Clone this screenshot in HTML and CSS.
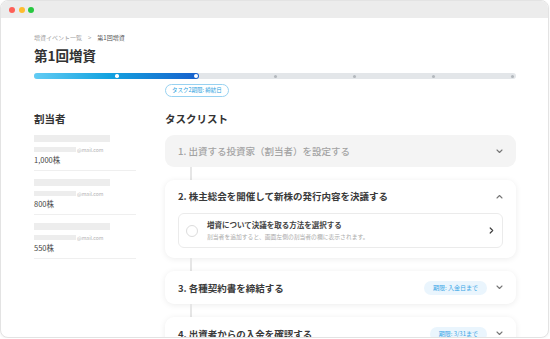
FILE: index.html
```html
<!DOCTYPE html>
<html lang="ja">
<head>
  <meta charset="UTF-8" />
  <meta name="viewport" content="width=device-width, initial-scale=1" />
  <title>第1回増資</title>
  <link rel="stylesheet" href="styles.css">
</head>
<body>
  <div class="window">
    <div class="titlebar">
      <span class="light red"></span>
      <span class="light yellow"></span>
      <span class="light green"></span>
    </div>

    <div class="page">
      <div class="breadcrumb">
        <span>増資イベント一覧</span>
        <span class="crumb-sep">&gt;</span>
        <span class="crumb-current">第1回増資</span>
      </div>
      <h1>第1回増資</h1>

      <div class="progress">
        <div class="progress-fill"></div>
        <div class="progress-dots">
          <span class="dot start"></span>
          <span class="dot done"></span>
          <span class="dot current"></span>
          <span class="dot"></span>
          <span class="dot"></span>
          <span class="dot"></span>
          <span class="dot"></span>
        </div>
      </div>
      <div class="deadline-pill">タスク2期限: 締結日</div>

      <div class="columns">
        <aside class="allottees">
          <h2>割当者</h2>
          <div class="allottee-list">
            <div class="allottee">
              <div class="name-bar"></div>
              <div class="email"><span class="email-bar"></span><span>@mail.com</span></div>
              <div class="shares">1,000株</div>
            </div>
            <div class="allottee">
              <div class="name-bar"></div>
              <div class="email"><span class="email-bar"></span><span>@mail.com</span></div>
              <div class="shares">800株</div>
            </div>
            <div class="allottee">
              <div class="name-bar"></div>
              <div class="email"><span class="email-bar"></span><span>@mail.com</span></div>
              <div class="shares">550株</div>
            </div>
          </div>
        </aside>

        <section class="tasks">
          <h2>タスクリスト</h2>
          <div class="task-list">
            <div class="task done">
              <div class="task-head">
                <span class="task-title">1. 出資する投資家（割当者）を設定する</span>
                <svg class="chevron" width="7" height="5" viewBox="0 0 7 5"><path d="M1 1l2.5 2.5L6 1" /></svg>
              </div>
            </div>
            <div class="connector"></div>

            <div class="task open">
              <div class="task-head">
                <span class="task-title">2. 株主総会を開催して新株の発行内容を決議する</span>
                <svg class="chevron" width="7" height="5" viewBox="0 0 7 5"><path d="M1 4l2.5-2.5L6 4" /></svg>
              </div>
              <div class="subtask">
                <span class="check"></span>
                <div class="subtask-text">
                  <div class="subtask-title">増資について決議を取る方法を選択する</div>
                  <div class="subtask-note">割当者を追加すると、画面左側の割当者の欄に表示されます。</div>
                </div>
                <svg class="chevron-right" width="5" height="7" viewBox="0 0 5 7"><path d="M1.2 1l2.5 2.5L1.2 6" /></svg>
              </div>
            </div>
            <div class="connector"></div>

            <div class="task">
              <div class="task-head">
                <span class="task-title">3. 各種契約書を締結する</span>
                <span class="badge">期限: 入金日まで</span>
                <svg class="chevron" width="7" height="5" viewBox="0 0 7 5"><path d="M1 1l2.5 2.5L6 1" /></svg>
              </div>
            </div>
            <div class="connector"></div>

            <div class="task">
              <div class="task-head">
                <span class="task-title">4. 出資者からの入金を確認する</span>
                <span class="badge">期限: 3/31まで</span>
                <svg class="chevron" width="7" height="5" viewBox="0 0 7 5"><path d="M1 1l2.5 2.5L6 1" /></svg>
              </div>
            </div>
          </div>
        </section>
      </div>
    </div>
  </div>
</body>
</html>
```

FILE: styles.css
```css
body {
  margin: 0;
  background: #fff;
  font-family: "Noto Sans CJK JP", "Noto Sans", sans-serif;
  color: #333;
}

.window {
  box-sizing: border-box;
  width: 549px;
  height: 338px;
  border: 1px solid #e3e3e3;
  border-radius: 8px;
  overflow: hidden;
  background: #fff;
  box-shadow: 0 1px 3px rgba(0, 0, 0, 0.05);
}

.titlebar {
  height: 17px;
  background: #ececec;
  display: flex;
  align-items: center;
  gap: 3.5px;
  padding-left: 8px;
}

.light {
  width: 6px;
  height: 6px;
  border-radius: 50%;
}

.light.red { background: #fe5f57; }
.light.yellow { background: #febc2e; }
.light.green { background: #28c840; }

.page {
  padding: 15px 32px 0 33px;
}

.breadcrumb {
  display: flex;
  gap: 6px;
  font-size: 6px;
  line-height: 9px;
  color: #a0a0a0;
}

.crumb-current {
  color: #555;
}

h1 {
  margin: 4px 0 0;
  font-size: 13.5px;
  line-height: 18px;
  font-weight: 700;
  color: #333;
}

/* progress bar */
.progress {
  position: relative;
  margin-top: 9px;
  height: 6px;
  border-radius: 3px;
  background: #e3e6e9;
}

.progress-fill {
  position: absolute;
  left: 0;
  top: 0;
  bottom: 0;
  width: 165px;
  border-radius: 3px;
  background: linear-gradient(90deg, #62ccf4 0%, #14a3e0 45%, #1760cc 100%);
}

.progress-dots {
  position: relative;
  height: 100%;
  display: flex;
  align-items: center;
  justify-content: space-between;
  padding: 0 2px;
}

.dot {
  width: 4px;
  height: 4px;
  border-radius: 50%;
  display: flex;
  align-items: center;
  justify-content: center;
}

.dot::after {
  content: "";
  width: 3px;
  height: 3px;
  border-radius: 50%;
  background: #b3b8bd;
}

.dot.start::after { background: transparent; }
.dot.done::after { background: #fff; width: 3.5px; height: 3.5px; }
.dot.current::after { background: #fff; width: 4px; height: 4px; }

.deadline-pill {
  box-sizing: border-box;
  width: fit-content;
  height: 13px;
  margin: 5px 0 0 131px;
  padding: 0 6px;
  border: 1px solid #98d2f1;
  border-radius: 7px;
  font-size: 5.5px;
  line-height: 11px;
  color: #2b9fe0;
}

/* columns */
.columns {
  display: flex;
  gap: 29px;
  margin-top: 15px;
}

h2 {
  margin: 0;
  font-size: 10.5px;
  line-height: 14px;
  font-weight: 700;
  color: #333;
}

.allottees {
  width: 102px;
  flex-shrink: 0;
}

.allottee-list {
  margin-top: 1px;
}

.allottee {
  padding: 8px 0 5px;
  border-bottom: 1px solid #efefef;
}

.name-bar {
  width: 76px;
  height: 7px;
  background: #ededed;
}

.email {
  display: flex;
  align-items: center;
  gap: 1px;
  height: 6px;
  margin-top: 4px;
  font-size: 5px;
  color: #b0b0b0;
}

.email-bar {
  width: 42px;
  height: 5px;
  background: #ededed;
}

.shares {
  margin-top: 3px;
  font-size: 7.5px;
  line-height: 10px;
  color: #444;
}

/* tasks */
.tasks {
  flex: 1;
}

.task-list {
  margin-top: 9px;
}

.task {
  border-radius: 9px;
  background: #fff;
  box-shadow: 0 1px 6px rgba(0, 0, 0, 0.08);
}

.task.done {
  background: #f4f4f4;
  box-shadow: none;
}

.task.open {
  padding-bottom: 10px;
}

.task-head {
  height: 33px;
  display: flex;
  align-items: center;
  gap: 9px;
  padding: 0 13px;
}

.task.done .task-head {
  height: 32px;
}

.task.open .task-head {
  height: 32px;
}

.task-title {
  flex: 1;
  font-size: 9.5px;
  font-weight: 700;
  color: #3a3a3a;
  white-space: nowrap;
}

.task.done .task-title {
  font-weight: 500;
  color: #a3a3a3;
}

.chevron path {
  fill: none;
  stroke: #777;
  stroke-width: 1.1;
  stroke-linecap: round;
  stroke-linejoin: round;
}

.badge {
  height: 14px;
  padding: 0 9px;
  border-radius: 7px;
  background: #eaf5fd;
  color: #3aa6e6;
  font-size: 6px;
  line-height: 14px;
  white-space: nowrap;
}

.connector {
  width: 2px;
  height: 13px;
  margin-left: 25px;
  background: #e6e6e6;
}

.subtask {
  display: flex;
  align-items: center;
  gap: 9px;
  height: 35px;
  box-sizing: border-box;
  margin: 1px 13px 0;
  padding: 0 8px 0 7px;
  border: 1px solid #ebebeb;
  border-radius: 6px;
}

.check {
  width: 12px;
  height: 12px;
  box-sizing: border-box;
  border: 1px solid #dcdcdc;
  border-radius: 50%;
  flex-shrink: 0;
}

.subtask-text {
  flex: 1;
}

.subtask-title {
  font-size: 7.5px;
  line-height: 10px;
  font-weight: 700;
  color: #444;
}

.subtask-note {
  margin-top: 3px;
  font-size: 5.8px;
  line-height: 8px;
  color: #aaa;
}

.chevron-right path {
  fill: none;
  stroke: #444;
  stroke-width: 1.2;
  stroke-linecap: round;
  stroke-linejoin: round;
}
```
